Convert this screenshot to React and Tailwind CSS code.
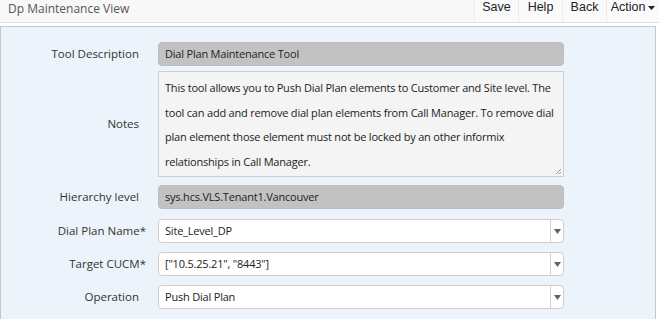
import React from "react";

const Label = ({ children, required }) => (
  <div className="w-[138px] shrink-0 text-right text-[11.5px] text-[#333]">
    {children}
    {required && <span className="-mr-[7px]">*</span>}
  </div>
);

const ReadOnly = ({ value }) => (
  <div className="h-[24px] w-[406px] rounded-[4px] border border-[#bdbdbd] bg-[#c2c2c2] px-[6px] text-[11px] leading-[22px] tracking-[-0.2px] text-[#222]">
    {value}
  </div>
);

const Select = ({ value }) => (
  <div className="flex h-[24px] w-[406px] rounded-[4px] border border-[#cfcfcf] bg-white text-[11px] tracking-[-0.2px] text-[#222]">
    <div className="flex-1 px-[6px] leading-[22px]">{value}</div>
    <div className="flex w-[13px] items-center justify-center border-l border-[#d4d4d4]">
      <svg width="7" height="5" viewBox="0 0 7 5">
        <path d="M0 0h7L3.5 5z" fill="#5c6270" />
      </svg>
    </div>
  </div>
);

const notes = [
  "This tool allows you to Push Dial Plan elements to Customer and Site level. The",
  "tool can add and remove dial plan elements from Call Manager. To remove dial",
  "plan element those element must not be locked by an other informix",
  "relationships in Call Manager.",
];

export default function App() {
  return (
    <div className="h-[319px] w-[659px] overflow-hidden bg-white font-['Open_Sans',sans-serif]">
      <div className="flex h-[23px] items-stretch border-b border-[#e2e2e2] bg-[#f8f8f8]">
        <div className="flex-1 pl-[8px] text-[12px] leading-[17px] text-[#555]">
          Dp Maintenance View
        </div>
        <div className="flex font-['Liberation_Sans',Arial,sans-serif] text-[12.5px] text-[#222]">
          {["Save", "Help", "Back"].map((b) => (
            <div
              key={b}
              className="flex w-[44px] justify-center border-l border-[#ececec] bg-[#fafafa] leading-[15px]"
            >
              {b}
            </div>
          ))}
          <div className="flex w-[53px] justify-center gap-[3px] border-l border-[#ececec] bg-[#fafafa] leading-[15px]">
            Action
            <svg width="7" height="4" viewBox="0 0 7 4" className="mt-[6px]">
              <path d="M0 0h7L3.5 4z" fill="#222" />
            </svg>
          </div>
        </div>
      </div>
      <div className="mr-[3px] mt-[3px] h-[300px] border border-b-0 border-[#c6c6c6] bg-[#edf3fa] pt-[15px]">
        <div className="flex items-center gap-[19px]">
          <Label>Tool Description</Label>
          <ReadOnly value="Dial Plan Maintenance Tool" />
        </div>
        <div className="mt-[5px] flex items-center gap-[19px]">
          <Label>Notes</Label>
          <div className="relative h-[106px] w-[406px] border border-[#cfcfcf] bg-[#f4f4f4] px-[6px] pt-[4px] text-[11px] leading-[24.5px] tracking-[-0.2px] text-[#222]">
            {notes.map((l) => (
              <div key={l} className="whitespace-nowrap">
                {l}
              </div>
            ))}
            <svg
              width="7"
              height="7"
              viewBox="0 0 7 7"
              className="absolute bottom-[1px] right-[1px]"
            >
              <path d="M1 6L6 1M4 6L6 4" stroke="#999" strokeWidth="1" />
            </svg>
          </div>
        </div>
        <div className="mt-[8px] flex items-center gap-[19px]">
          <Label>Hierarchy level</Label>
          <ReadOnly value="sys.hcs.VLS.Tenant1.Vancouver" />
        </div>
        <div className="mt-[10px] flex items-center gap-[19px]">
          <Label required>Dial Plan Name</Label>
          <Select value="Site_Level_DP" />
        </div>
        <div className="mt-[9px] flex items-center gap-[19px]">
          <Label required>Target CUCM</Label>
          <Select value={'["10.5.25.21", "8443"]'} />
        </div>
        <div className="mt-[9px] flex items-center gap-[19px]">
          <Label>Operation</Label>
          <Select value="Push Dial Plan" />
        </div>
      </div>
    </div>
  );
}
